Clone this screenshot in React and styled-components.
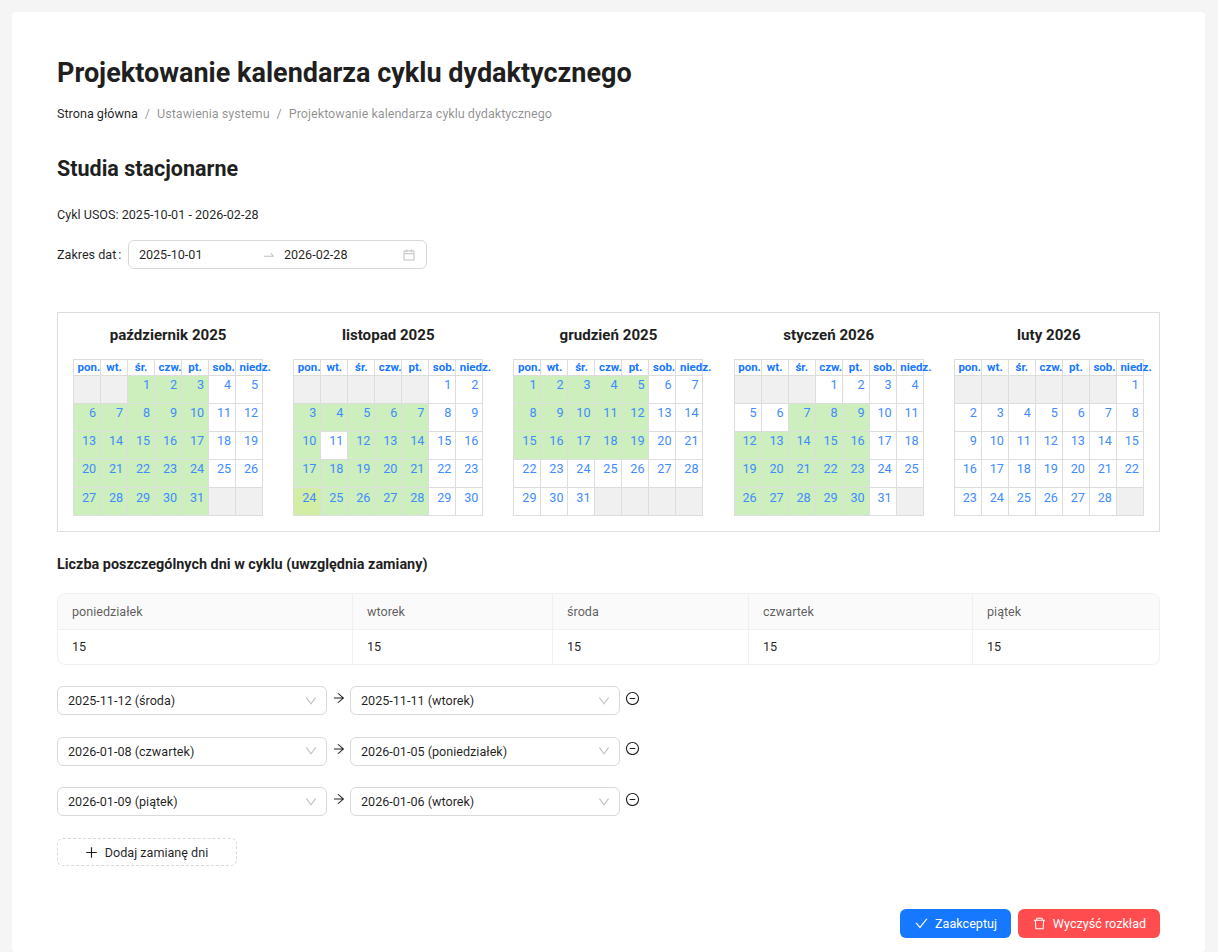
import React from "react";
import styled, { createGlobalStyle } from "styled-components";
import {
  AiOutlineArrowRight,
  AiOutlineCalendar,
  AiOutlineCheck,
  AiOutlineDelete,
  AiOutlineDown,
  AiOutlineMinusCircle,
  AiOutlinePlus,
  AiOutlineSwapRight,
} from "react-icons/ai";

const GlobalStyle = createGlobalStyle`
  html, body {
    margin: 0;
    padding: 0;
    background: #f5f5f5;
    font-family: Roboto, "Liberation Sans", sans-serif;
    font-size: 12.6px;
    color: rgba(0, 0, 0, 0.88);
  }
  * { box-sizing: border-box; }
`;

const Page = styled.div`
  padding: 12px 13px 0 12px;
  height: 952px;
  overflow: hidden;
`;

const Card = styled.main`
  background: #fff;
  border-radius: 4px;
  padding: 41px 45px 0 45px;
  height: 940px;
`;

const Title = styled.h1`
  margin: 0;
  font-size: 27px;
  line-height: 40px;
  font-weight: 700;
  color: #1f1f1f;
`;

const Breadcrumb = styled.nav`
  display: flex;
  margin-top: 11px;
  line-height: 20px;
  color: rgba(0, 0, 0, 0.45);
`;

const Crumb = styled.span`
  color: ${(p) => (p.$active ? "rgba(0, 0, 0, 0.88)" : "rgba(0, 0, 0, 0.45)")};
`;

const CrumbSep = styled.span`
  margin: 0 7px;
`;

const Subtitle = styled.h2`
  margin: 29px 0 0;
  font-size: 21.5px;
  line-height: 32px;
  font-weight: 700;
  color: #1f1f1f;
`;

const CycleInfo = styled.p`
  margin: 20px 0 0;
  line-height: 20px;
`;

const DateRow = styled.div`
  display: flex;
  align-items: center;
  margin-top: 15px;
`;

const DateLabel = styled.label`
  margin-right: 7px;
`;

const LabelColon = styled.span`
  margin-left: 2px;
`;

const RangePicker = styled.div`
  display: flex;
  align-items: center;
  width: 299px;
  height: 29px;
  padding: 0 10px 0 9.5px;
  border: 1px solid #d9d9d9;
  border-radius: 6px;
  background: #fff;
`;

const RangeValue = styled.span`
  width: 123px;
`;

const RangeArrow = styled.span`
  display: flex;
  width: 22px;
  color: rgba(0, 0, 0, 0.25);
  font-size: 14px;
`;

const RangeIcon = styled.span`
  display: flex;
  margin-left: auto;
  color: rgba(0, 0, 0, 0.25);
  font-size: 14px;
`;

const CalendarPanel = styled.section`
  display: grid;
  grid-template-columns: repeat(5, 1fr);
  margin-top: 43px;
  height: 220px;
  border: 1px solid #ddd;
`;

const Month = styled.div`
  display: flex;
  flex-direction: column;
  align-items: center;
`;

const MonthTitle = styled.h3`
  margin: 12px 0 0;
  font-size: 15.1px;
  line-height: 20px;
  font-weight: 700;
  color: #1f1f1f;
`;

const MonthTable = styled.table`
  margin-top: 14px;
  width: 190px;
  table-layout: fixed;
  border-collapse: collapse;
  tbody tr:last-child td { padding-top: 3px; }
`;

const Weekday = styled.th`
  width: 27px;
  height: 16px;
  padding: 0 3.5px;
  border: 1px solid #ddd;
  font-size: 11.5px;
  line-height: 13px;
  font-weight: 700;
  color: #1677ff;
  white-space: nowrap;
  text-align: center;
  overflow: visible;
`;

const cellColors = { work: "#cdeebd", today: "#d3eda4", off: "#fff", empty: "#f0f0f0" };

const Day = styled.td`
  height: 28px;
  padding: 2px 4px 0 0;
  border: 1px solid #ddd;
  background: ${(p) => cellColors[p.$kind]};
  font-size: 12.6px;
  line-height: 14px;
  color: #3f8cff;
  text-align: right;
  vertical-align: top;
`;

const SectionLabel = styled.h4`
  margin: 23px 0 0;
  font-size: 14.4px;
  line-height: 20px;
  font-weight: 700;
  color: #1f1f1f;
`;

const CountTable = styled.div`
  display: grid;
  grid-template-columns: 295px 200px 196px 224px 188px;
  margin-top: 18px;
  border: 1px solid #f0f0f0;
  border-radius: 8px;
  overflow: hidden;
`;

const CountHead = styled.div`
  height: 36px;
  padding: 0 14px;
  display: flex;
  align-items: center;
  background: #fafafa;
  color: rgba(0, 0, 0, 0.65);
  border-bottom: 1px solid #f0f0f0;
  border-right: ${(p) => (p.$last ? "none" : "1px solid #f0f0f0")};
`;

const CountCell = styled.div`
  height: 34px;
  padding: 0 14px 1px;
  display: flex;
  align-items: center;
  border-right: ${(p) => (p.$last ? "none" : "1px solid #f0f0f0")};
`;

const SwapList = styled.div`
  display: flex;
  flex-direction: column;
  gap: 21.5px;
  margin-top: 21px;
`;

const SwapRow = styled.div`
  display: flex;
  align-items: center;
  height: 29px;
`;

const Select = styled.div`
  display: flex;
  align-items: center;
  justify-content: space-between;
  width: 270px;
  height: 29px;
  padding: 0 8px 0 10px;
  border: 1px solid #d9d9d9;
  border-radius: 6px;
  background: #fff;
`;

const SelectIcon = styled.span`
  display: flex;
  color: rgba(0, 0, 0, 0.25);
  font-size: 14px;
`;

const SwapArrow = styled.span`
  display: flex;
  justify-content: center;
  width: 23px;
  margin-top: -5px;
  font-size: 14px;
`;

const RemoveIcon = styled.span`
  display: flex;
  margin: -5px 0 0 5px;
  font-size: 15px;
`;

const AddButton = styled.button`
  display: flex;
  align-items: center;
  justify-content: center;
  gap: 6px;
  width: 180px;
  height: 28px;
  margin-top: 22px;
  padding: 0 2px 0 0;
  border: 1px dashed #d9d9d9;
  border-radius: 6px;
  background: #fff;
  font: inherit;
  color: rgba(0, 0, 0, 0.88);
  svg { font-size: 15px; }
`;

const ActionBar = styled.div`
  display: flex;
  justify-content: flex-end;
  gap: 7px;
  margin-top: 43px;
`;

const ActionButton = styled.button`
  display: flex;
  align-items: center;
  justify-content: center;
  gap: 6px;
  height: 29px;
  width: ${(p) => p.$width}px;
  border: 0;
  border-radius: 6px;
  background: ${(p) => p.$bg};
  color: #fff;
  font: inherit;
  svg { font-size: 15px; }
`;

const work = (ranges, skip = []) => {
  const out = new Set();
  ranges.forEach(([a, b]) => {
    for (let d = a; d <= b; d++) if (!skip.includes(d)) out.add(d);
  });
  return out;
};

const months = [
  { name: "październik 2025", offset: 2, days: 31, work: work([[1, 3], [6, 10], [13, 17], [20, 24], [27, 31]]) },
  { name: "listopad 2025", offset: 5, days: 30, work: work([[3, 7], [10, 14], [17, 21], [25, 28]], [11]), today: 24 },
  { name: "grudzień 2025", offset: 0, days: 31, work: work([[1, 5], [8, 12], [15, 19]]) },
  { name: "styczeń 2026", offset: 3, days: 31, work: work([[7, 9], [12, 16], [19, 23], [26, 30]]) },
  { name: "luty 2026", offset: 6, days: 28, work: work([]) },
];

const weekdays = ["pon.", "wt.", "śr.", "czw.", "pt.", "sob.", "niedz."];

const buildWeeks = (m) => {
  const cells = [];
  for (let i = 0; i < m.offset; i++) cells.push(null);
  for (let d = 1; d <= m.days; d++) cells.push(d);
  while (cells.length < 35) cells.push(null);
  const weeks = [];
  for (let i = 0; i < 35; i += 7) weeks.push(cells.slice(i, i + 7));
  return weeks;
};

const dayKind = (m, d) => {
  if (d === null) return "empty";
  if (m.today === d) return "today";
  return m.work.has(d) ? "work" : "off";
};

const counts = ["poniedziałek", "wtorek", "środa", "czwartek", "piątek"];

const swaps = [
  ["2025-11-12 (środa)", "2025-11-11 (wtorek)"],
  ["2026-01-08 (czwartek)", "2026-01-05 (poniedziałek)"],
  ["2026-01-09 (piątek)", "2026-01-06 (wtorek)"],
];

function DaySelect({ value }) {
  return (
    <Select>
      <span>{value}</span>
      <SelectIcon>
        <AiOutlineDown />
      </SelectIcon>
    </Select>
  );
}

export default function App() {
  return (
    <Page>
      <GlobalStyle />
      <Card>
        <Title>Projektowanie kalendarza cyklu dydaktycznego</Title>
        <Breadcrumb>
          <Crumb $active>Strona główna</Crumb>
          <CrumbSep>/</CrumbSep>
          <Crumb>Ustawienia systemu</Crumb>
          <CrumbSep>/</CrumbSep>
          <Crumb>Projektowanie kalendarza cyklu dydaktycznego</Crumb>
        </Breadcrumb>
        <Subtitle>Studia stacjonarne</Subtitle>
        <CycleInfo>Cykl USOS: 2025-10-01 - 2026-02-28</CycleInfo>
        <DateRow>
          <DateLabel>
            Zakres dat<LabelColon>:</LabelColon>
          </DateLabel>
          <RangePicker>
            <RangeValue>2025-10-01</RangeValue>
            <RangeArrow>
              <AiOutlineSwapRight />
            </RangeArrow>
            <span>2026-02-28</span>
            <RangeIcon>
              <AiOutlineCalendar />
            </RangeIcon>
          </RangePicker>
        </DateRow>

        <CalendarPanel>
          {months.map((m) => (
            <Month key={m.name}>
              <MonthTitle>{m.name}</MonthTitle>
              <MonthTable>
                <thead>
                  <tr>
                    {weekdays.map((w) => (
                      <Weekday key={w}>{w}</Weekday>
                    ))}
                  </tr>
                </thead>
                <tbody>
                  {buildWeeks(m).map((week, i) => (
                    <tr key={i}>
                      {week.map((d, j) => (
                        <Day key={j} $kind={dayKind(m, d)}>
                          {d}
                        </Day>
                      ))}
                    </tr>
                  ))}
                </tbody>
              </MonthTable>
            </Month>
          ))}
        </CalendarPanel>

        <SectionLabel>Liczba poszczególnych dni w cyklu (uwzględnia zamiany)</SectionLabel>
        <CountTable>
          {counts.map((c, i) => (
            <CountHead key={c} $last={i === counts.length - 1}>
              {c}
            </CountHead>
          ))}
          {counts.map((c, i) => (
            <CountCell key={c} $last={i === counts.length - 1}>
              15
            </CountCell>
          ))}
        </CountTable>

        <SwapList>
          {swaps.map(([from, to]) => (
            <SwapRow key={from}>
              <DaySelect value={from} />
              <SwapArrow>
                <AiOutlineArrowRight />
              </SwapArrow>
              <DaySelect value={to} />
              <RemoveIcon>
                <AiOutlineMinusCircle />
              </RemoveIcon>
            </SwapRow>
          ))}
        </SwapList>
        <AddButton>
          <AiOutlinePlus />
          Dodaj zamianę dni
        </AddButton>

        <ActionBar>
          <ActionButton $bg="#1677ff" $width={111}>
            <AiOutlineCheck />
            Zaakceptuj
          </ActionButton>
          <ActionButton $bg="#ff4d4f" $width={142}>
            <AiOutlineDelete />
            Wyczyść rozkład
          </ActionButton>
        </ActionBar>
      </Card>
    </Page>
  );
}
